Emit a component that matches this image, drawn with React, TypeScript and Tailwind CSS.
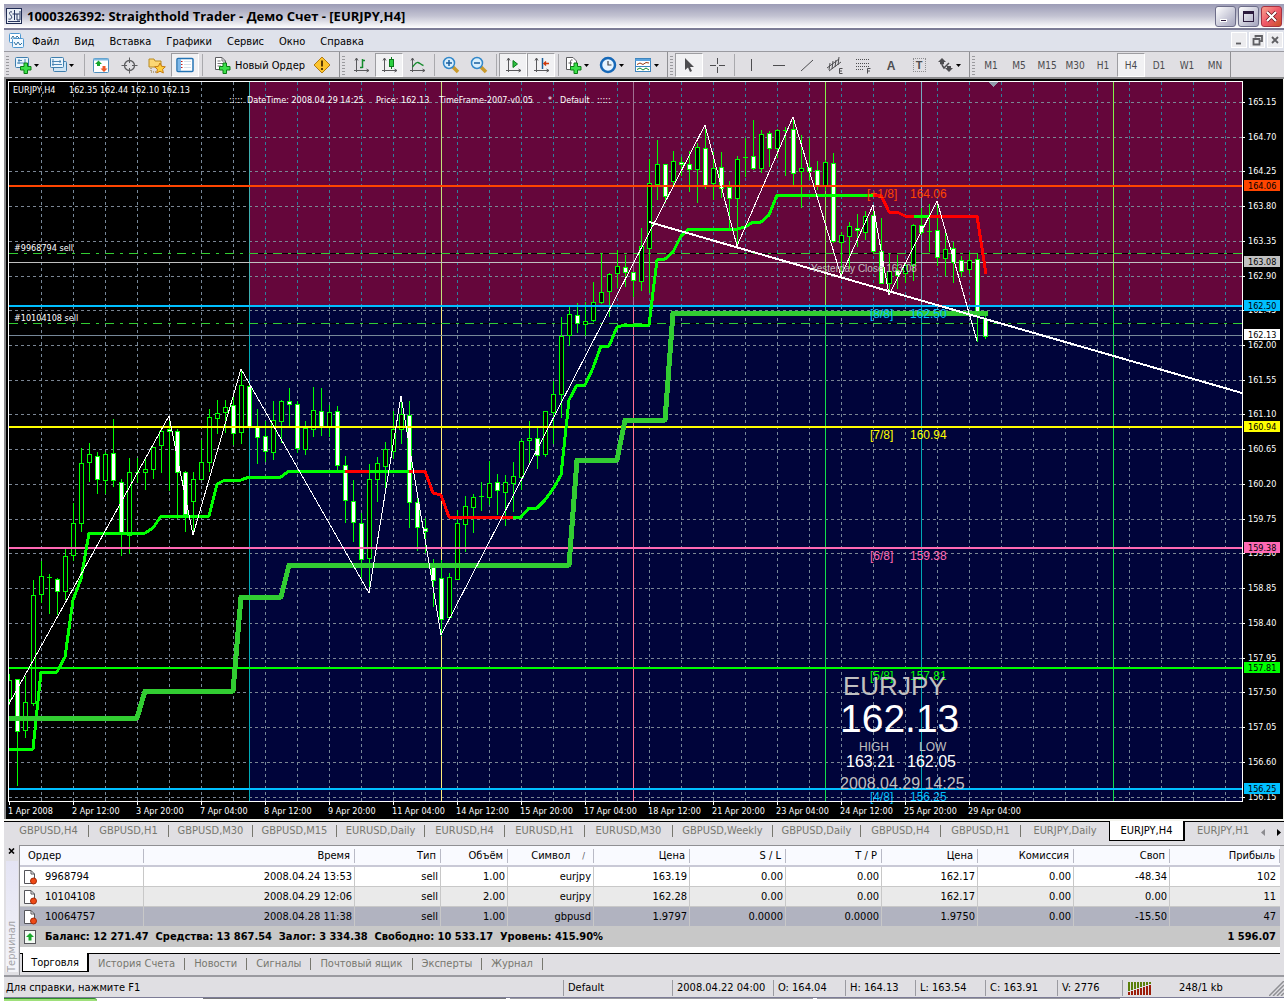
import type { ReactNode } from 'react';

type Candle = [high: number, top: number, bottom: number, low: number, down: 0 | 1];

const candles: Candle[] = [
  [674, 680, 699, 704, 0], [679, 679, 731, 785, 1], [676, 702, 730, 737, 0], [580, 595, 703, 705, 0],
  [561, 576, 594, 602, 0], [574, 577, 578, 613, 0], [578, 579, 591, 614, 1], [549, 556, 591, 599, 0],
  [503, 523, 555, 560, 0], [448, 463, 523, 531, 0], [443, 454, 462, 481, 0], [452, 456, 479, 493, 1],
  [452, 454, 480, 493, 0], [419, 453, 480, 486, 1], [479, 482, 534, 555, 1], [458, 472, 535, 553, 0],
  [458, 472, 473, 482, 0], [458, 469, 472, 489, 0], [447, 447, 469, 478, 0], [427, 431, 445, 472, 0],
  [417, 429, 431, 490, 1], [429, 431, 472, 518, 1], [471, 472, 514, 531, 1], [472, 479, 501, 532, 0],
  [440, 462, 479, 479, 0], [409, 417, 462, 471, 0], [400, 413, 418, 433, 0], [400, 407, 412, 432, 0],
  [396, 405, 433, 444, 1], [369, 385, 432, 443, 0], [383, 386, 426, 427, 1], [409, 427, 437, 463, 1],
  [421, 436, 451, 461, 1], [401, 420, 452, 459, 0], [400, 401, 421, 442, 0], [388, 401, 404, 426, 1],
  [401, 404, 448, 452, 1], [421, 428, 449, 454, 0], [387, 410, 429, 436, 0], [388, 411, 426, 435, 1],
  [405, 412, 427, 436, 0], [406, 411, 465, 470, 1], [456, 465, 500, 522, 1], [480, 501, 522, 541, 1],
  [513, 523, 559, 577, 1], [464, 479, 558, 592, 0], [457, 463, 479, 501, 0], [442, 449, 466, 491, 0],
  [411, 429, 451, 458, 0], [397, 414, 429, 443, 0], [401, 415, 502, 527, 1], [495, 502, 527, 550, 1],
  [518, 528, 531, 552, 1], [559, 567, 580, 606, 1], [560, 578, 619, 635, 1], [573, 577, 617, 618, 0],
  [510, 523, 579, 579, 0], [496, 506, 524, 551, 0], [494, 497, 507, 532, 0], [482, 496, 497, 510, 0],
  [461, 483, 497, 504, 0], [474, 482, 490, 514, 1], [475, 482, 492, 525, 0], [462, 476, 483, 511, 0],
  [439, 441, 477, 489, 0], [421, 438, 440, 463, 0], [428, 438, 455, 468, 1], [411, 411, 454, 456, 0],
  [381, 394, 412, 443, 0], [317, 336, 394, 417, 0], [307, 314, 335, 345, 0], [303, 315, 323, 332, 1],
  [302, 321, 324, 335, 0], [282, 302, 320, 321, 0], [253, 292, 302, 303, 0], [273, 274, 291, 316, 0],
  [250, 266, 273, 287, 0], [255, 267, 272, 286, 1], [272, 272, 280, 296, 1], [228, 246, 281, 290, 0],
  [159, 183, 248, 292, 0], [140, 164, 184, 199, 0], [164, 164, 196, 202, 1], [151, 161, 181, 185, 0],
  [157, 162, 164, 175, 1], [151, 164, 169, 191, 1], [143, 147, 169, 202, 0], [126, 148, 185, 188, 1],
  [152, 168, 183, 199, 0], [152, 167, 188, 197, 1], [181, 187, 198, 227, 1], [156, 159, 198, 247, 0],
  [138, 157, 158, 176, 0], [120, 156, 168, 169, 1], [130, 134, 168, 172, 0], [131, 133, 148, 166, 1],
  [129, 130, 148, 157, 0], [127, 130, 131, 175, 0], [117, 129, 173, 186, 1], [135, 168, 171, 207, 0],
  [138, 167, 171, 179, 1], [161, 170, 185, 189, 1], [160, 162, 185, 190, 0], [153, 163, 241, 242, 1],
  [232, 235, 242, 275, 0], [222, 226, 236, 268, 0], [214, 228, 230, 246, 1], [211, 216, 232, 239, 0],
  [206, 215, 251, 252, 1], [218, 251, 283, 283, 1], [253, 271, 283, 292, 0], [255, 270, 275, 288, 1],
  [262, 265, 273, 282, 0], [224, 225, 265, 280, 0], [208, 225, 232, 234, 1], [204, 231, 232, 251, 0],
  [202, 230, 257, 265, 1], [231, 249, 258, 275, 0], [242, 248, 262, 282, 1], [256, 260, 271, 276, 1],
  [252, 260, 269, 273, 0], [253, 259, 311, 341, 1], [312, 319, 336, 338, 1],
];

const priceTicks = [
  [165.15, 102], [164.7, 137], [164.25, 171], [163.8, 206], [163.35, 241], [162.9, 276], [162.45, 310],
  [162, 345], [161.55, 380], [161.1, 414], [160.65, 449], [160.2, 484], [159.75, 519], [159.3, 553],
  [158.85, 588], [158.4, 623], [157.95, 658], [157.5, 692], [157.05, 727], [156.6, 762], [156.15, 797],
];

const dateTicks = [
  '1 Apr 2008', '2 Apr 12:00', '3 Apr 20:00', '7 Apr 04:00', '8 Apr 12:00', '9 Apr 20:00', '11 Apr 04:00',
  '14 Apr 12:00', '15 Apr 20:00', '17 Apr 04:00', '18 Apr 12:00', '21 Apr 20:00', '23 Apr 04:00',
  '24 Apr 12:00', '25 Apr 20:00', '29 Apr 04:00',
];

const levels = [
  { y: 186, color: '#ff4500', label: '[+1/8]', x: 867, price: '164.06' },
  { y: 306, color: '#00bfff', label: '[8/8]', x: 870, price: '162.50' },
  { y: 427, color: '#ffff00', label: '[7/8]', x: 870, price: '160.94' },
  { y: 548, color: '#ff69b4', label: '[6/8]', x: 870, price: '159.38' },
  { y: 668, color: '#00ff00', label: '[5/8]', x: 870, price: '157.81' },
  { y: 789, color: '#00bfff', label: '[4/8]', x: 870, price: '156.25' },
];

const periods = [
  { x: 249, upper: '#3fb0b0', lower: '#00a9b5' },
  { x: 441, upper: '#c3e07a', lower: '#ffee7a' },
  { x: 633, upper: '#a07090', lower: '#ff6f92' },
  { x: 825, upper: '#84f04a', lower: '#12e04c' },
  { x: 921, upper: '#74a9bd', lower: '#00a9b5' },
  { x: 1113, upper: '#84f04a', lower: '#12e04c' },
];

const gridX = Array.from({ length: 38 }, (_, i) => 41 + i * 32);

function Chart() {
  return (
    <svg viewBox="6 79 1277 739" className="block h-auto w-full bg-black font-['DejaVu_Sans_Condensed','DejaVu_Sans',sans-serif] text-[9px]">
      <defs>
        <clipPath id="plot">
          <rect x="9" y="82" width="1233" height="719" />
        </clipPath>
      </defs>

      <g clipPath="url(#plot)" shapeRendering="crispEdges">
        {/* Background zones */}
        <rect x="249" y="82" width="993" height="224" fill="#65063b" />
        <rect x="249" y="306" width="993" height="495" fill="#00043a" />

        {/* Grid */}
        {gridX.map((x) => (
          <g key={x} strokeDasharray="3 3">
            <path d={`M${x + 0.5} 82V306`} stroke={x > 249 ? '#2f7f9b' : '#778899'} />
            <path d={`M${x + 0.5} 306V801`} stroke="#778899" />
          </g>
        ))}
        {priceTicks.map(([, y]) => (
          <path key={y} d={`M9 ${y + 0.5}H1242`} stroke="#7b8694" strokeDasharray="3 3" />
        ))}
        {periods.map((p) => (
          <g key={p.x}>
            <path d={`M${p.x + 0.5} 82V306`} stroke={p.upper} />
            <path d={`M${p.x + 0.5} 306V801`} stroke={p.lower} />
          </g>
        ))}

        {/* Open orders, bid and yesterday close */}
        {[253, 323].map((y) => (
          <g key={y}>
            <path d={`M9 ${y + 0.5}H1242`} stroke="#000" />
            <path d={`M9 ${y + 0.5}H1242`} stroke="#32cd32" strokeDasharray="9 6 3 6" />
          </g>
        ))}
        <path d="M9 262.5H1242" stroke="#c0c0c0" />
        <path d="M9 335.5H1242" stroke="#778899" />

        {/* Candles */}
        {candles.map(([high, top, bottom, low, down], i) => {
          const x = 9 + i * 8;
          return (
            <g key={x} stroke="#00ff00">
              <path d={`M${x + 0.5} ${high}V${low + 1}`} />
              {bottom - top <= 1 ? (
                <path d={`M${x - 2} ${top + 0.5}H${x + 3}`} />
              ) : (
                <rect x={x - 1.5} y={top + 0.5} width="4" height={bottom - top} fill={down ? '#fff' : '#000'} />
              )}
            </g>
          );
        })}

        {/* Murrey levels */}
        {levels.map((l) => (
          <path key={l.y} d={`M9 ${l.y}H1242`} stroke={l.color} strokeWidth="2" />
        ))}

        {/* Moving averages */}
        <g fill="none" strokeWidth="3" strokeLinejoin="round" stroke="#00ff00">
          <path d="M9 749H33L41 672H57L65 657L73 600L81 579L89 533H145L153 528L161 516H209L217 484L225 480H241L249 477H281L289 471H345M369 471H409" />
          <path d="M513 517H521L529 508H537L545 500L553 489L561 475L569 400L577 385H585L593 368L601 346H609L617 327L625 325H649L657 260L665 259L673 252L681 236L689 229H737L745 227L753 222H761L769 215L777 195H873" />
          <path stroke="#ff0000" d="M345 471H369M409 471H425L433 493L441 495L449 517H513" />
          <path stroke="#ff0000" d="M873 195H881L889 212H897L905 216H977L986 274" />
          <path d="M914 216H929" />
        </g>
        <path
          fill="none"
          stroke="#32cd32"
          strokeWidth="5"
          strokeLinejoin="round"
          d="M9 718H137L145 691H233L241 597H281L289 565H569L577 460H617L625 420H665L673 313H988"
        />

        {/* ZigZag and trend line */}
        <path
          fill="none"
          stroke="#fff"
          d="M9 704L169 416L193 535L241 369L369 593L401 396L441 635L705 125L737 246L793 117L841 276L873 205L889 295L937 201L977 341"
        />
        <path d="M649 222L1242 393" stroke="#fff" strokeWidth="2" />
        <path d="M988 82H998L993 87Z" fill="#8e9aa8" />
      </g>

      {/* Level captions */}
      <g className="font-['Liberation_Sans',Arial,sans-serif] text-[12px]">
        {levels.map((l) => (
          <g key={l.y} fill={l.color}>
            <text x={l.x} y={l.y + 12}>{l.label}</text>
            <text x="910" y={l.y + 12}>{l.price}</text>
          </g>
        ))}
      </g>

      {/* Quote panel */}
      <g className="font-['Liberation_Sans',Arial,sans-serif]" fill="#c0c0c0">
        <text x="811" y="272" className="text-[10px]">Yesterday Close 163.08</text>
        <text x="843" y="695" className="text-[26px]">EURJPY</text>
        <text x="840" y="732" className="text-[39px]" fill="#fff">162.13</text>
        <text x="859" y="751" className="text-[12px]">HIGH</text>
        <text x="919" y="751" className="text-[12px]">LOW</text>
        <text x="846" y="767" className="text-[16px]" fill="#fff">163.21</text>
        <text x="907" y="767" className="text-[16px]" fill="#fff">162.05</text>
        <text x="840" y="789" className="text-[16px]">2008.04.29 14:25</text>
      </g>

      {/* Frame */}
      <path d="M8.5 801.5V81.5H1242.5V801.5Z" fill="none" stroke="#fff" shapeRendering="crispEdges" />

      {/* Captions on the plot */}
      <g fill="#fff">
        <text x="13" y="93">EURJPY,H4</text>
        <text x="69" y="93">162.35 162.44 162.10 162.13</text>
        <text x="229" y="103">:::::</text>
        <text x="247" y="103">DateTime: 2008.04.29 14:25</text>
        <text x="376" y="103">Price: 162.13</text>
        <text x="439" y="103">TimeFrame-2007-v0.05</text>
        <text x="548" y="103">*</text>
        <text x="560" y="103">Default</text>
        <text x="597" y="103">:::::</text>
        <text x="14" y="251">#9968794 sell</text>
        <text x="14" y="321">#10104108 sell</text>
      </g>

      {/* Price axis */}
      <g fill="#fff">
        {priceTicks.map(([price, y]) => (
          <g key={y}>
            <path d={`M1243 ${y + 0.5}H1245`} stroke="#fff" shapeRendering="crispEdges" />
            <text x="1248" y={y + 3}>{price.toFixed(2)}</text>
          </g>
        ))}
      </g>
      {[...levels, { y: 262, color: '#c0c0c0', price: '163.08' }, { y: 335, color: '#ffffff', price: '162.13' }].map((t) => (
        <g key={t.y}>
          <rect x="1244" y={t.y - 6} width="36" height="11" fill={t.color} />
          <text x="1248" y={t.y + 3} fill="#000">{t.price}</text>
        </g>
      ))}

      {/* Time axis */}
      <g fill="#fff">
        {dateTicks.map((label, i) => (
          <g key={label}>
            <path d={`M${9.5 + i * 64} 802V805`} stroke="#fff" shapeRendering="crispEdges" />
            <text x={8 + i * 64} y="814">{label}</text>
          </g>
        ))}
      </g>
    </svg>
  );
}

/* Toolbar pieces */

function Icon({ children }: { children: ReactNode }) {
  return (
    <svg viewBox="0 0 18 18" className="h-[18px] w-[18px] shrink-0" fill="none">
      {children}
    </svg>
  );
}

function Tool({ label, active, children }: { label: string; active?: boolean; children: ReactNode }) {
  return (
    <button
      aria-label={label}
      className={
        active
          ? 'flex h-6 w-7 items-center justify-center border border-r-white border-b-white border-t-[#9d9da1] border-l-[#9d9da1] bg-[#f1f1f3]'
          : 'flex h-6 w-7 items-center justify-center'
      }
    >
      {children}
    </button>
  );
}

function DropTool({ label, children }: { label: string; children: ReactNode }) {
  return (
    <button aria-label={label} className="flex h-6 w-[35px] items-center gap-[2px] pl-[3px]">
      {children}
      <svg viewBox="0 0 5 3" className="h-[3px] w-[5px]"><path d="M0 0H5L2.5 3Z" fill="#000" /></svg>
    </button>
  );
}

function Separator() {
  return <div className="flex w-[6px] justify-center"><div className="h-[22px] w-px bg-[#a9a9ad]" /></div>;
}

function ToolGroup({ children }: { children: ReactNode }) {
  return (
    <div className="flex items-center border-r border-[#8f8f93] pt-px pr-px">
      <div className="flex w-[7px] flex-col gap-[2px] pl-[2px]">
        {[0, 1, 2, 3, 4, 5, 6].map((n) => <div key={n} className="h-px w-[3px] bg-[#9a9a9e]" />)}
      </div>
      {children}
    </div>
  );
}

const axes = <path d="M4.5 2V16M2 14.5H17M3 4.5L4.5 2L6 4.5M14.5 13L17 14.5L14.5 16" stroke="#59595c" />;
const plus = <path d="M10 7H13.500V10.500H17V14H13.500V17.500H10V14H6.500V10.500H10Z" fill="#3be04a" stroke="#0a7d15" />;

function Toolbar() {
  return (
    <div className="flex h-[27px] items-stretch border-b-2 border-[#8b8b8d] bg-[#e0dfe3]">
      <ToolGroup>
        <DropTool label="Новый график">
          <Icon>
            <rect x="1.5" y="1.5" width="13" height="10" rx="1" fill="#eaf5fd" stroke="#3f7fae" />
            <path d="M4 4.5H8M5 3V8M3 7H12M11 3V6" stroke="#4b86b4" />
            {plus}
          </Icon>
        </DropTool>
        <DropTool label="Профили">
          <Icon>
            <rect x="4.5" y="5.5" width="13" height="10" rx="1" fill="#cfe5f5" stroke="#3f7fae" />
            <rect x="1.5" y="1.5" width="13" height="10" rx="1" fill="#eaf5fd" stroke="#3f7fae" />
            <path d="M4 3V10M3 8.5H13M3 5.5H12M11 4V7" stroke="#4b86b4" />
          </Icon>
        </DropTool>
        <Separator />
        <Tool label="Обзор рынка">
          <Icon>
            <rect x="1.5" y="2.5" width="15" height="14" rx="1" fill="#fff" stroke="#4d8fbe" />
            <path d="M1.5 3.5H16.5" stroke="#7db7e0" strokeWidth="2" />
            <path d="M6.5 4.500L10 8H8V10H5V8H3Z" fill="#16a62a" />
            <path d="M12 16L15.500 12.500H13.500V10H10.500V12.500H8.500Z" fill="#ef5a28" />
          </Icon>
        </Tool>
        <Tool label="Окно данных">
          <Icon>
            <circle cx="9.5" cy="9.5" r="5" stroke="#5d5d60" strokeWidth="1.3" />
            <path d="M9.5 1.500V7M9.5 12V17.500M1.500 9.5H7M12 9.5H17.500" stroke="#5d5d60" />
          </Icon>
        </Tool>
        <Tool label="Навигатор">
          <Icon>
            <path d="M1 3H6L7 5H13V11H1Z" fill="#fbd774" stroke="#b98a22" />
            <path d="M3 12V16H8" stroke="#8a6a2a" strokeDasharray="1 1" />
            <path d="M12 7L13.6 10.3L17.3 10.8L14.6 13.3L15.3 17L12 15.2L8.7 17L9.4 13.3L6.7 10.8L10.4 10.3Z" fill="#ffcf3f" stroke="#c47a12" />
          </Icon>
        </Tool>
        <Tool label="Терминал" active>
          <Icon>
            <rect x="1" y="2.5" width="16" height="13" rx="1" fill="#fff" stroke="#2474b5" strokeWidth="1.5" />
            <path d="M2 3H5V15H2Z" fill="#7fb9ea" />
            <path d="M5 5.5H6.5M5 8.5H6.5M5 11.5H6.5" stroke="#c01818" />
            <path d="M8 5.5H15M8 8.5H15M8 11.5H15" stroke="#d5e2ec" />
          </Icon>
        </Tool>
        <Separator />
        <button className="flex h-6 w-[103px] items-center gap-1 pl-2 text-[11px]">
          <Icon>
            <path d="M2.5 1.5H9L12.5 5V13.5H2.5Z" fill="#fff" stroke="#5b5b5f" />
            <path d="M9 1.5V5H12.5M4.5 5H7.5M4.5 7.5H10M4.5 10H8" stroke="#77777a" />
            {plus}
          </Icon>
          <span className="pt-[2px] whitespace-nowrap">Новый Ордер</span>
        </button>
        <Tool label="Советники">
          <Icon>
            <path d="M9 1L17 9L9 17L1 9Z" fill="#fcc42f" stroke="#b17a12" />
            <path d="M9 4.5V10.5" stroke="#5b3b05" strokeWidth="2" />
            <path d="M9 12V14" stroke="#5b3b05" strokeWidth="2" />
          </Icon>
        </Tool>
        <div className="w-[2px]" />
      </ToolGroup>

      <ToolGroup>
        <Tool label="Бары">
          <Icon>{axes}<path d="M10.5 3V12M8 11.5H10.5M10.5 4.5H13" stroke="#138a2b" strokeWidth="1.5" /></Icon>
        </Tool>
        <Tool label="Свечи" active>
          <Icon>{axes}<path d="M11.5 1V13" stroke="#0b7a1c" /><rect x="9.5" y="3.5" width="4" height="7" fill="#2bd040" stroke="#0b7a1c" /></Icon>
        </Tool>
        <Tool label="Линия">
          <Icon>{axes}<path d="M4.5 11C7 8 8 6 10 6.5C12 7 13 9 15.5 9.5" stroke="#138a2b" strokeWidth="1.3" /></Icon>
        </Tool>
        <Separator />
        <Tool label="Приблизить">
          <Icon>
            <path d="M11 11L16 16" stroke="#c99a2c" strokeWidth="3.5" />
            <circle cx="7" cy="7" r="5.5" fill="#d9effc" stroke="#3287c9" strokeWidth="1.5" />
            <path d="M4 7H10M7 4V10" stroke="#1a5f9e" strokeWidth="1.5" />
          </Icon>
        </Tool>
        <Tool label="Отдалить">
          <Icon>
            <path d="M11 11L16 16" stroke="#c99a2c" strokeWidth="3.5" />
            <circle cx="7" cy="7" r="5.5" fill="#d9effc" stroke="#3287c9" strokeWidth="1.5" />
            <path d="M4 7H10" stroke="#1a5f9e" strokeWidth="1.5" />
          </Icon>
        </Tool>
        <Separator />
        <Tool label="Автопрокрутка" active>
          <Icon>{axes}<path d="M9 4.5L13.5 8L9 11.5Z" fill="#2bc040" stroke="#0b7a1c" /></Icon>
        </Tool>
        <Tool label="Сдвиг графика" active>
          <Icon>{axes}<path d="M10.5 2V13" stroke="#1c5f98" strokeWidth="1.5" /><path d="M17 7.5H12M14 5.5L12 7.5L14 9.5" stroke="#cf3a0c" strokeWidth="1.5" /></Icon>
        </Tool>
        <Separator />
        <DropTool label="Индикаторы">
          <Icon>
            <path d="M2.5 1.5H9L12.5 5V13.5H2.5Z" fill="#fff" stroke="#5b5b5f" />
            <path d="M8.5 4C6.5 3.5 6.5 5 6.5 6V11M4.5 7H8" stroke="#5b5b5f" />
            {plus}
          </Icon>
        </DropTool>
        <DropTool label="Периоды">
          <Icon>
            <circle cx="9" cy="9" r="7" fill="#e6f4ff" stroke="#1668b8" strokeWidth="2.5" />
            <path d="M9 5V9H12.5" stroke="#454548" strokeWidth="1.2" />
          </Icon>
        </DropTool>
        <DropTool label="Шаблоны">
          <Icon>
            <rect x="1.5" y="2.5" width="15" height="13" fill="#fff" stroke="#3d84be" />
            <path d="M1.5 4H16.5" stroke="#5aa2dd" strokeWidth="2" />
            <path d="M3 8.5L6 7L9 8.5L12 6.5L15 7" stroke="#9c3d14" />
            <path d="M2 10.5H16" stroke="#3d84be" />
            <path d="M3 13.5L6 12L9 14L12 12L15 14" stroke="#148a2a" />
          </Icon>
        </DropTool>
      </ToolGroup>

      <ToolGroup>
        <Tool label="Курсор" active>
          <Icon><path d="M5 2V14L8 11.5L10 16L12 15L10 11H14Z" fill="#4d4d50" /></Icon>
        </Tool>
        <Tool label="Перекрестие">
          <Icon><path d="M9.5 2V8M9.5 11V17M2 9.5H8M11 9.5H17" stroke="#4d4d50" /></Icon>
        </Tool>
        <Separator />
        <Tool label="Вертикальная линия">
          <Icon><path d="M9.5 3V15" stroke="#4d4d50" /></Icon>
        </Tool>
        <Tool label="Горизонтальная линия">
          <Icon><path d="M3 9.5H15" stroke="#4d4d50" /></Icon>
        </Tool>
        <Tool label="Трендовая линия">
          <Icon><path d="M3 15L15 4" stroke="#4d4d50" /></Icon>
        </Tool>
        <Tool label="Канал">
          <Icon>
            <path d="M1 12L13 3M3 15L15 6M4 7L3 14M7 5L6 13M10 4L9 11M13 1L12 9" stroke="#4d4d50" />
            <path d="M16.5 12.5H13.5V17.5H16.5M13.5 15H16" stroke="#4d4d50" />
          </Icon>
        </Tool>
        <Tool label="Фибоначчи">
          <Icon>
            <path d="M2 3.5H15M2 7.5H15M2 10.5H15M2 13.5H10" stroke="#4d4d50" strokeDasharray="1 1" />
            <path d="M16.5 12.5H13.5V17.5M13.5 15H16" stroke="#4d4d50" />
          </Icon>
        </Tool>
        <Tool label="Текст">
          <span className="pt-px font-['Liberation_Sans',Arial,sans-serif] text-[12px] leading-4 font-bold text-[#4d4d50]">A</span>
        </Tool>
        <Tool label="Текстовая метка">
          <span className="h-[14px] w-[13px] border border-dotted border-[#8d8d90] text-center font-['Liberation_Sans',Arial,sans-serif] text-[11px] leading-3 font-bold text-[#4d4d50]">T</span>
        </Tool>
        <DropTool label="Стрелки">
          <Icon>
            <path d="M6 2L10 6H8V8L6 9L4 8V6H2Z" fill="#4d4d50" />
            <path d="M13 16L9 12H11V10H15V12H17Z" fill="#4d4d50" />
            <path d="M6 9L8 12L13 7" stroke="#4d4d50" strokeWidth="1.5" />
          </Icon>
        </DropTool>
      </ToolGroup>

      <ToolGroup>
        {['M1', 'M5', 'M15', 'M30', 'H1', 'H4', 'D1', 'W1', 'MN'].map((p) => (
          <Tool key={p} label={p} active={p === 'H4'}>
            <span className="text-[10px] text-[#4b4b4e]">{p}</span>
          </Tool>
        ))}
      </ToolGroup>
    </div>
  );
}

function TitleBar() {
  return (
    <header className="flex h-[26px] items-center border-b-2 border-[#7c7c96] bg-linear-to-b from-[#9c9cb6] via-[#c3c3d2] to-white pr-[2px] pl-[2px]">
      <svg viewBox="0 0 16 16" className="h-4 w-4" fill="none">
        <rect x="0.5" y="0.5" width="15" height="15" fill="#e9eef5" stroke="#1e2b52" />
        <path d="M6 4C3 3 3 6 4.5 7C6.5 8.5 6 12 2.5 11M8.5 2V12M6.5 6H11M13.5 6H11V12H14V3M2 13.5H14" stroke="#26345e" />
      </svg>
      <h1 className="ml-[5px] flex-1 font-['Open_Sans',sans-serif] text-[13px] leading-5 font-bold">
        1000326392: Straighthold Trader - Демо Счет - [EURJPY,H4]
      </h1>
      <div className="flex gap-[2px]">
        <button aria-label="Свернуть" className="flex h-[21px] w-[21px] items-end rounded-[3px] border border-[#6d6d89] bg-linear-to-br from-white to-[#a4a4bd] p-1">
          <span className="h-[3px] w-[7px] border border-white bg-[#2b1a3c]" />
        </button>
        <button aria-label="Развернуть" className="flex h-[21px] w-[21px] items-center justify-center rounded-[3px] border border-[#6d6d89] bg-linear-to-br from-white to-[#a4a4bd]">
          <span className="h-[11px] w-[11px] border border-t-[3px] border-[#2b1a3c]" />
        </button>
        <button aria-label="Закрыть" className="flex h-[21px] w-[21px] items-center justify-center rounded-[3px] border border-[#a83242] bg-linear-to-br from-[#f5a08c] via-[#f0576a] to-[#c9521a]">
          <svg viewBox="0 0 13 13" className="h-[13px] w-[13px]">
            <path d="M2 2L11 11M11 2L2 11" stroke="#5b1016" strokeWidth="3.5" />
            <path d="M2 2L11 11M11 2L2 11" stroke="#fff" strokeWidth="2.2" />
          </svg>
        </button>
      </div>
    </header>
  );
}

function MenuBar() {
  return (
    <nav className="flex h-[22px] items-center border-b border-[#9a9aa0] bg-[#dfe2eb] pl-[5px]">
      <svg viewBox="0 0 15 15" className="h-[15px] w-[15px]" fill="none">
        <rect x="0.5" y="0.5" width="11" height="9" rx="1" fill="#fff" stroke="#4d96cf" />
        <path d="M2 6L4 3L6 6L8 3L10 5" stroke="#2f6f9f" />
        <rect x="3.5" y="5.5" width="11" height="9" rx="1" fill="#f2f9ff" stroke="#4d96cf" />
        <path d="M5 9L7 12L9 9L11 12L13 10" stroke="#2f6f9f" />
      </svg>
      {['Файл', 'Вид', 'Вставка', 'Графики', 'Сервис', 'Окно', 'Справка'].map((item) => (
        <button key={item} className="ml-px h-5 px-[7px] pt-[2px] text-[11px] leading-4">{item}</button>
      ))}
      <div className="ml-auto flex gap-[2px] pr-px pb-px">
        {[
          ['Свернуть график', 'M4 10.5H9'],
          ['Восстановить график', 'M5.5 4.5V3H12V8H10.5M3.5 6H9.5V11.5H3.5Z'],
          ['Закрыть график', 'M4 4L10 10M10 4L4 10'],
        ].map(([label, d]) => (
          <button key={label} aria-label={label} className="h-4 w-4 border border-white bg-[#ececef]">
            <svg viewBox="0 0 14 14" className="h-[14px] w-[14px]" fill="none"><path d={d} stroke="#5f5f63" strokeWidth="1.8" /></svg>
          </button>
        ))}
      </div>
    </nav>
  );
}

const chartTabs = [
  ['GBPUSD,H4', 'w-20'], ['GBPUSD,H1', 'w-20'], ['GBPUSD,M30', 'w-21'], ['GBPUSD,M15', 'w-21'],
  ['EURUSD,Daily', 'w-22'], ['EURUSD,H4', 'w-20'], ['EURUSD,H1', 'w-20'], ['EURUSD,M30', 'w-22'],
  ['GBPUSD,Weekly', 'w-25'], ['GBPUSD,Daily', 'w-22'], ['GBPUSD,H4', 'w-20'], ['GBPUSD,H1', 'w-20'],
  ['EURJPY,Daily', 'w-22'], ['EURJPY,H4', 'w-19'], ['EURJPY,H1', 'w-19'],
];

function ChartTabs() {
  return (
    <div className="border-t-2 border-[#f4f4ee] bg-[#e0dfe3]">
      <div className="flex h-[21px] border-t border-black pl-[5px]">
        {chartTabs.map(([name, width], i) => (
          <button
            key={i}
            className={
              i === 13
                ? `${width} -mt-px h-5 shrink-0 border border-t-0 border-r-2 border-black bg-white pt-px text-[11px] leading-[18px]`
                : `${width} flex h-[18px] shrink-0 items-center justify-center text-[11px] text-[#77776f]`
            }
          >
            {i === 13 ? name : <span className="flex-1">{name}</span>}
            {i < 12 && <span className="h-3 w-px bg-[#77776f]" />}
          </button>
        ))}
        <div className="ml-auto flex items-center gap-3 pr-[7px]">
          <button aria-label="Назад" className="flex"><svg viewBox="0 0 4 7" className="h-[7px] w-1"><path d="M4 0V7L0 3.5Z" fill="#8b8b8f" /></svg></button>
          <button aria-label="Вперёд" className="flex"><svg viewBox="0 0 4 7" className="h-[7px] w-1"><path d="M0 0V7L4 3.5Z" fill="#000" /></svg></button>
        </div>
      </div>
    </div>
  );
}

const columns = [
  ['Ордер', 'w-[124px]'], ['Время', 'w-[211px]'], ['Тип', 'w-[86px]'], ['Объём', 'w-[67px]'], ['Символ', 'w-[86px]'],
  ['Цена', 'w-24'], ['S / L', 'w-24'], ['T / P', 'w-24'], ['Цена', 'w-24'], ['Комиссия', 'w-24'], ['Своп', 'w-24'], ['Прибыль', 'w-auto'],
];

const orders = [
  { bg: 'bg-white', cells: ['9968794', '2008.04.24 13:53', 'sell', '1.00', 'eurjpy', '163.19', '0.00', '0.00', '162.17', '0.00', '-48.34', '102'] },
  { bg: 'bg-[#eaeaea]', cells: ['10104108', '2008.04.29 12:06', 'sell', '2.00', 'eurjpy', '162.28', '0.00', '0.00', '162.17', '0.00', '0.00', '11'] },
  { bg: 'bg-[#b1b3c0]', cells: ['10064757', '2008.04.28 11:38', 'sell', '1.00', 'gbpusd', '1.9797', '0.0000', '0.0000', '1.9750', '0.00', '-15.50', '47'] },
];

function OrderIcon() {
  return (
    <svg viewBox="0 0 14 16" className="h-4 w-[14px] shrink-0" fill="none">
      <path d="M1.5 1.5H8L11.5 5V14.5H1.5Z" fill="#fff" stroke="#55555a" />
      <path d="M8 1.5V5H11.5" stroke="#55555a" />
      <circle cx="10.5" cy="12" r="3" fill="#ef4a16" stroke="#a52a08" />
    </svg>
  );
}

function Terminal() {
  return (
    <section className="flex border-b-2 border-[#9a9aa0] bg-[#e0dfe3] pt-[3px]">
      <aside className="flex w-[15px] flex-col items-center">
        <button aria-label="Закрыть терминал" className="flex h-3 items-center">
          <svg viewBox="0 0 7 6" className="h-[6px] w-[7px]"><path d="M1 0.5L6 5.5M6 0.5L1 5.5" stroke="#000" strokeWidth="1.6" /></svg>
        </button>
        <div className="mt-1 mb-[3px] flex w-3 flex-1 rotate-180 justify-start bg-linear-to-t from-[#e4e4f4] to-[#f4f4f8] text-[11px] leading-3 text-[#a3a3a7] [writing-mode:vertical-rl]">
          Терминал
        </div>
      </aside>
      <div className="min-w-0 flex-1 border-t border-l border-[#8f8f93] pr-1">
        <table className="w-full table-fixed border-separate border-spacing-0 text-right text-[11px]">
          <thead>
            <tr className="h-[21px] bg-[#f9faff]">
              {columns.map(([name, width], i) => (
                <th key={i} className={`${width} border-b-2 border-[#c9c9d6] p-0 pt-px font-normal`}>
                  <div className={i === 0 ? 'border-r border-[#b9bac6] pl-2 text-left leading-[14px]' : 'border-r border-[#b9bac6] pr-1 leading-[14px]'}>
                    {name}
                    {name === 'Символ' && <span className="pr-1 pl-3 text-[9px] text-[#55555a]">/</span>}
                  </div>
                </th>
              ))}
            </tr>
          </thead>
          <tbody>
            {orders.map((order) => (
              <tr key={order.cells[0]} className={`${order.bg} h-5`}>
                {order.cells.map((cell, i) => (
                  <td key={i} className="border-r border-b border-[#c8c8c8] p-0 pr-[2px] leading-4 last:border-r-0 last:pr-1">
                    {i === 0 ? <div className="flex items-center gap-2 pl-[3px]"><OrderIcon />{cell}</div> : cell}
                  </td>
                ))}
              </tr>
            ))}
            <tr className="h-5 bg-[#c8c8c8] font-bold">
              <td colSpan={11} className="p-0 leading-4">
                <div className="flex items-center gap-[9px] pl-1">
                  <svg viewBox="0 0 12 14" className="h-[14px] w-3" fill="none">
                    <rect x="0.5" y="0.5" width="11" height="13" fill="#f4fbf4" stroke="#55555a" />
                    <path d="M6 3L10 7H7.5V10.5H4.5V7H2Z" fill="#18a82a" />
                  </svg>
                  <span className="whitespace-pre">Баланс: 12 271.47  Средства: 13 867.54  Залог: 3 334.38  Свободно: 10 533.17  Уровень: 415.90%</span>
                </div>
              </td>
              <td className="p-0 pr-1 leading-4">1 596.07</td>
            </tr>
          </tbody>
        </table>
        <div className="h-[6px] bg-white" />
        <div className="flex h-[22px] items-start border-t border-black pl-[2px]">
          <button className="-mt-px h-[19px] w-[67px] border border-t-0 border-r-2 border-black bg-white pt-px text-[11px] leading-4">Торговля</button>
          {['История Счета', 'Новости', 'Сигналы', 'Почтовый ящик', 'Эксперты', 'Журнал'].map((tab) => (
            <button key={tab} className="flex h-5 items-center text-[11px] text-[#77776f]">
              <span className="px-[9px]">{tab}</span>
              <span className="h-3 w-px bg-[#77776f]" />
            </button>
          ))}
        </div>
      </div>
    </section>
  );
}

const statusCells = [
  ['Default', 'w-[109px]'], ['2008.04.22 04:00', 'w-[101px]'], ['O: 164.04', 'w-[72px]'], ['H: 164.13', 'w-[70px]'],
  ['L: 163.54', 'w-[70px]'], ['C: 163.91', 'w-[72px]'], ['V: 2776', 'w-[65px]'],
];

function StatusBar() {
  return (
    <footer className="flex h-[21px] items-center border-b border-[#7c7c96] bg-[#e0dfe3] pt-[2px] text-[11px]">
      <span className="flex-1 pl-[2px]">Для справки, нажмите F1</span>
      {statusCells.map(([text, width]) => (
        <span key={text} className={`${width} h-4 border-l border-[#9a9aa0] pl-1 leading-4 whitespace-nowrap`}>{text}</span>
      ))}
      <span className="flex h-4 w-[162px] items-center border-l border-[#9a9aa0] pl-[5px]">
        <svg viewBox="0 0 24 13" className="h-[13px] w-6">
          {[0, 1, 2, 3, 4, 5, 6, 7].map((n) => (
            <g key={n}>
              <rect x={n * 3} y="0" width="2" height={9 - n} fill="#5a7f0a" />
              <rect x={n * 3} y={10 - n} width="2" height={3 + n} fill="#9c1d0a" />
            </g>
          ))}
        </svg>
        <span className="pl-[27px]">248/1 kb</span>
        <svg viewBox="0 0 15 15" className="ml-auto h-[15px] w-[15px]">
          <path d="M0 15L15 0M4 15L15 4M8 15L15 8M12 15L15 12" stroke="#8f8f93" strokeWidth="1.5" />
        </svg>
      </span>
    </footer>
  );
}

export default function App() {
  return (
    <div className="bg-white px-1 pt-1 font-['DejaVu_Sans_Condensed','DejaVu_Sans',sans-serif] text-black">
      <TitleBar />
      <MenuBar />
      <Toolbar />
      <main className="border-r border-l-2 border-r-[#f4f4ee] border-l-[#8b8b8d] bg-black pb-px">
        <Chart />
      </main>
      <ChartTabs />
      <Terminal />
      <StatusBar />
      <div className="flex h-[3px] gap-1">
        <div className="w-[93px] rounded-tr border-t border-[#2f8f2a] bg-[#9fe07a]" />
        <div className="ml-[102px] flex-1 border-t border-[#77777b]" />
        <div className="flex-1 border-t border-[#9a9aa0]" />
        <div className="flex-1 border-t border-[#9a9aa0]" />
        <div className="w-40" />
      </div>
    </div>
  );
}
